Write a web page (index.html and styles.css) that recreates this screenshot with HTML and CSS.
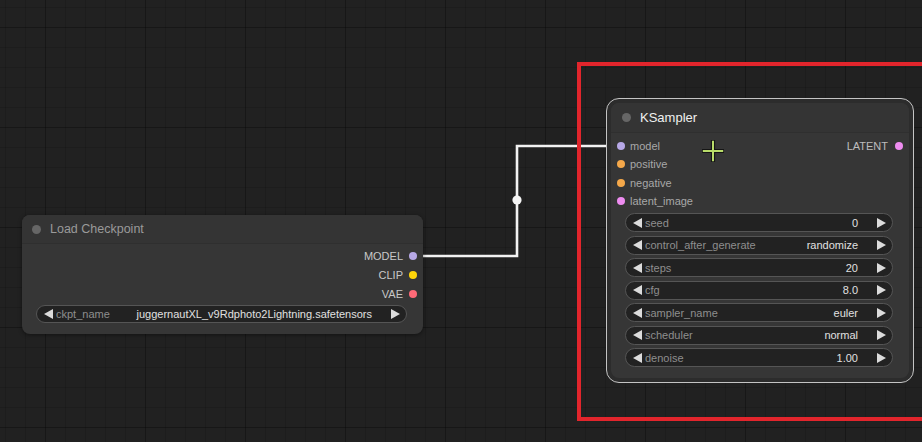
FILE: index.html
```html
<!DOCTYPE html>
<html>
<head>
<meta charset="utf-8">
<link rel="stylesheet" href="styles.css">
</head>
<body>
<div class="canvas">
  <svg class="wires" width="922" height="442" viewBox="0 0 922 442">
    <path d="M417 256 H517 V146 H617" fill="none" stroke="#f2f2f2" stroke-width="2.6"/>
    <circle cx="517" cy="200" r="4.6" fill="#f5f5f5"/>
  </svg>

  <div class="node node-lc">
    <div class="title"><span class="tdot"></span><span class="ttext">Load Checkpoint</span></div>
    <div class="body">
      <div class="slots">
        <div class="col-in"></div>
        <div class="col-out">
          <div class="slot out"><span class="lbl">MODEL</span><span class="dot c-model"></span></div>
          <div class="slot out"><span class="lbl">CLIP</span><span class="dot c-clip"></span></div>
          <div class="slot out"><span class="lbl">VAE</span><span class="dot c-vae"></span></div>
        </div>
      </div>
      <div class="widgets">
        <div class="widget"><span class="arr l"></span><span class="wl">ckpt_name</span><span class="wv">juggernautXL_v9Rdphoto2Lightning.safetensors</span><span class="arr r"></span></div>
      </div>
    </div>
  </div>

  <div class="selwrap">
    <div class="node node-ks">
      <div class="title"><span class="tdot"></span><span class="ttext">KSampler</span></div>
      <div class="body">
        <div class="slots">
          <div class="col-in">
            <div class="slot in"><span class="dot c-model"></span><span class="lbl">model</span></div>
            <div class="slot in"><span class="dot c-cond"></span><span class="lbl">positive</span></div>
            <div class="slot in"><span class="dot c-cond"></span><span class="lbl">negative</span></div>
            <div class="slot in"><span class="dot c-latent"></span><span class="lbl">latent_image</span></div>
          </div>
          <div class="col-out">
            <div class="slot out"><span class="lbl">LATENT</span><span class="dot c-latent"></span></div>
          </div>
        </div>
        <div class="widgets">
          <div class="widget"><span class="arr l"></span><span class="wl">seed</span><span class="wv">0</span><span class="arr r"></span></div>
          <div class="widget"><span class="arr l"></span><span class="wl">control_after_generate</span><span class="wv">randomize</span><span class="arr r"></span></div>
          <div class="widget"><span class="arr l"></span><span class="wl">steps</span><span class="wv">20</span><span class="arr r"></span></div>
          <div class="widget"><span class="arr l"></span><span class="wl">cfg</span><span class="wv">8.0</span><span class="arr r"></span></div>
          <div class="widget"><span class="arr l"></span><span class="wl">sampler_name</span><span class="wv">euler</span><span class="arr r"></span></div>
          <div class="widget"><span class="arr l"></span><span class="wl">scheduler</span><span class="wv">normal</span><span class="arr r"></span></div>
          <div class="widget"><span class="arr l"></span><span class="wl">denoise</span><span class="wv">1.00</span><span class="arr r"></span></div>
        </div>
      </div>
    </div>
  </div>

  <div class="highlight"></div>

  <svg class="cursor" width="26" height="26" viewBox="0 0 26 26">
    <path d="M13 2 V24 M2 13 H24" stroke="#151515" stroke-width="4.2" fill="none"/>
    <path d="M13 2.8 V23.2 M2.8 13 H23.2" stroke="#b9dc6a" stroke-width="2" fill="none"/>
  </svg>
</div>
</body>
</html>
```

FILE: styles.css
```css
html, body {
  margin: 0;
  padding: 0;
}
body {
  width: 922px;
  height: 442px;
  overflow: hidden;
  background: #202020;
  font-family: "Liberation Sans", Arial, sans-serif;
}
.canvas {
  position: relative;
  width: 922px;
  height: 442px;
  overflow: hidden;
  background-color: #212121;
  background-image:
    linear-gradient(to right, rgba(0,0,0,0.22) 1px, transparent 1px),
    linear-gradient(to bottom, rgba(0,0,0,0.22) 1px, transparent 1px),
    linear-gradient(to right, rgba(0,0,0,0.12) 1px, transparent 1px),
    linear-gradient(to bottom, rgba(0,0,0,0.12) 1px, transparent 1px);
  background-size: 100px 100px, 100px 100px, 20px 20px, 20px 20px;
  background-position: 45px 27px, 45px 27px, 5px 7px, 5px 7px;
}
.wires {
  position: absolute;
  left: 0;
  top: 0;
}
.node {
  display: flex;
  flex-direction: column;
  background: #363636;
  border-radius: 8px;
  box-shadow: 0 1px 4px rgba(0,0,0,0.45);
}
.node-lc {
  position: absolute;
  left: 22px;
  top: 215px;
  width: 401px;
}
.selwrap {
  position: absolute;
  left: 606px;
  top: 98px;
  width: 298px;
  padding: 4px;
  border: 1px solid #c4c4c4;
  border-radius: 13px;
  background: #2c2c2c;
}
.node-ks {
  box-shadow: none;
}
.title {
  display: flex;
  align-items: center;
  height: 29px;
  padding-left: 10px;
  background: #343434;
  border-radius: 8px 8px 0 0;
  border-bottom: 1px solid #2f2f2f;
  box-sizing: border-box;
}
.node-ks .title {
  height: 30px;
  padding-left: 11px;
}
.tdot {
  width: 9px;
  height: 9px;
  border-radius: 50%;
  background: #666666;
  flex: none;
}
.ttext {
  margin-left: 9px;
  font-size: 12.5px;
  color: #9a9a9a;
}
.node-ks .ttext {
  font-size: 13px;
  color: #f0f0f0;
}
.body {
  display: flex;
  flex-direction: column;
  padding-top: 2px;
  padding-bottom: 11px;
}
.node-ks .body {
  padding-top: 3.5px;
}
.slots {
  display: flex;
  justify-content: space-between;
}
.col-in, .col-out {
  display: flex;
  flex-direction: column;
}
.slot {
  display: flex;
  align-items: center;
  height: 19px;
  font-size: 11px;
}
.node-ks .slot {
  height: 18.5px;
}
.slot.in {
  padding-left: 6px;
  color: #a8a8a8;
}
.slot.in .lbl {
  margin-left: 5px;
}
.slot.out {
  justify-content: flex-end;
  padding-right: 6px;
  color: #c8c8c8;
}
.slot.out .lbl {
  margin-right: 6px;
}
.node-ks .slot.out .lbl {
  margin-right: 7px;
  color: #bdbdbd;
}
.dot {
  width: 8px;
  height: 8px;
  border-radius: 50%;
  flex: none;
}
.c-model { background: #b7a8e6; }
.c-clip { background: #ffd60a; }
.c-vae { background: #ff6a78; }
.c-cond { background: #f5a84a; }
.c-latent { background: #ee8cf0; }
.widgets {
  display: flex;
  flex-direction: column;
  gap: 3.5px;
  margin: 1.5px 16px 0 14px;
}
.node-ks .widgets {
  margin-top: 2.5px;
}
.widget {
  display: flex;
  align-items: center;
  height: 18px;
  box-sizing: border-box;
  border: 1px solid #555555;
  border-radius: 10px;
  background: #222222;
  font-size: 11px;
  padding: 0 6px 0 7px;
}
.node-ks .widget {
  height: 19px;
}
.arr {
  width: 0;
  height: 0;
  border-top: 5px solid transparent;
  border-bottom: 5px solid transparent;
  flex: none;
}
.arr.l {
  border-right: 9px solid #dcdcdc;
}
.arr.r {
  border-left: 9px solid #dcdcdc;
  margin-left: 19px;
}
.wl {
  margin-left: 3px;
  color: #8e8e8e;
  flex: 1;
  white-space: nowrap;
}
.wv {
  color: #e0e0e0;
  white-space: nowrap;
}
.highlight {
  position: absolute;
  left: 577px;
  top: 62px;
  width: 341px;
  height: 351px;
  border: 4px solid #e2252c;
  border-right: none;
}
.cursor {
  position: absolute;
  left: 700px;
  top: 138px;
}
```
